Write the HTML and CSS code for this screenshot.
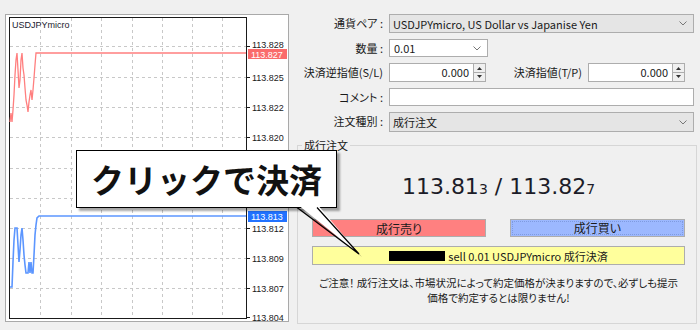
FILE: index.html
```html
<!DOCTYPE html>
<html lang="ja">
<head>
  <meta charset="UTF-8" />
  <title>新規注文</title>
  <link rel="stylesheet" href="styles.css">
</head>
<body>

  <div class="page">

    <!-- チャート -->
    <svg class="chart" width="284" height="308" viewBox="5 14 284 308">
      <rect x="5.5" y="14.5" width="283" height="307" fill="#fff" stroke="#a9a9a9"/>
      <g stroke="#c8c8c8" stroke-dasharray="3 3">
        <line x1="40.5" y1="18" x2="40.5" y2="318"/>
        <line x1="71.5" y1="18" x2="71.5" y2="318"/>
        <line x1="101.5" y1="18" x2="101.5" y2="318"/>
        <line x1="132.5" y1="18" x2="132.5" y2="318"/>
        <line x1="162.5" y1="18" x2="162.5" y2="318"/>
        <line x1="192.5" y1="18" x2="192.5" y2="318"/>
        <line x1="222.5" y1="18" x2="222.5" y2="318"/>
        <line x1="10" y1="46.5" x2="246" y2="46.5"/>
        <line x1="10" y1="77.5" x2="246" y2="77.5"/>
        <line x1="10" y1="107.5" x2="246" y2="107.5"/>
        <line x1="10" y1="137.5" x2="246" y2="137.5"/>
        <line x1="10" y1="168.5" x2="246" y2="168.5"/>
        <line x1="10" y1="198.5" x2="246" y2="198.5"/>
        <line x1="10" y1="228.5" x2="246" y2="228.5"/>
        <line x1="10" y1="258.5" x2="246" y2="258.5"/>
        <line x1="10" y1="288.5" x2="246" y2="288.5"/>
      </g>
      <rect x="9.5" y="17.5" width="237" height="301" fill="none" stroke="#1a1a1a"/>
      <g stroke="#1a1a1a">
        <line x1="246" y1="46.5" x2="250" y2="46.5"/>
        <line x1="246" y1="77.5" x2="250" y2="77.5"/>
        <line x1="246" y1="107.5" x2="250" y2="107.5"/>
        <line x1="246" y1="137.5" x2="250" y2="137.5"/>
        <line x1="246" y1="228.5" x2="250" y2="228.5"/>
        <line x1="246" y1="258.5" x2="250" y2="258.5"/>
        <line x1="246" y1="288.5" x2="250" y2="288.5"/>
        <line x1="246" y1="317.5" x2="250" y2="317.5"/>
      </g>
      <g class="axis">
        <text x="252" y="48">113.828</text>
        <text x="252" y="81">113.825</text>
        <text x="252" y="111">113.822</text>
        <text x="252" y="141">113.820</text>
        <text x="252" y="232">113.812</text>
        <text x="252" y="262">113.809</text>
        <text x="252" y="292">113.807</text>
        <text x="252" y="321">113.804</text>
      </g>
      <polyline fill="none" stroke="#ff7f7f" stroke-width="1.3"
        points="10,122 11,113 12,122 13,110 14,95 15,75 16,60 17,53 18,70 19,88 20,80 21,60 22,53 23,68 24,75 25,88 26,100 27,105 28,112 29,102 30,95 31,90 32,100 33,90 34,78 35,65 36,53 246,53"/>
      <polyline fill="none" stroke="#5c96ff" stroke-width="1.6"
        points="10,287 12,287 13,262 14,240 15,228 17,228 18,245 19,262 20,250 21,235 22,228 23,240 24,255 25,265 26,273 28,273 29,262 30,273 31,262 32,273 33,273 34,255 35,235 36,225 37,218 39,216 246,216"/>
      <rect x="248" y="49" width="39" height="10" fill="#fa6b6b"/>
      <text class="tag" x="251" y="57.5">113.827</text>
      <rect x="248" y="211" width="39" height="11" fill="#2272ff"/>
      <text class="tag" x="251" y="220">113.813</text>
      <text class="title" x="12" y="28">USDJPYmicro</text>
    </svg>

    <!-- 注文フォーム -->
    <div class="order">
      <div class="rows">
        <div class="row tall">
          <span class="lbl">通貨ペア :</span>
          <div class="field gray wide">USDJPYmicro, US Dollar vs Japanise Yen
            <svg class="chev" width="8" height="5" viewBox="0 0 8 5"><polyline points="0.5,0.5 4,4 7.5,0.5" fill="none" stroke="#777"/></svg>
          </div>
        </div>
        <div class="row">
          <span class="lbl">数量 :</span>
          <div class="field qty">0.01
            <svg class="chev" width="8" height="5" viewBox="0 0 8 5"><polyline points="0.5,0.5 4,4 7.5,0.5" fill="none" stroke="#777"/></svg>
          </div>
        </div>
        <div class="row tall">
          <span class="lbl">決済逆指値(S/L)</span>
          <div class="spin">
            <span class="num">0.000</span>
            <svg class="arrows" width="13" height="19" viewBox="0 0 13 19">
              <rect x="0.5" y="0.5" width="12" height="18" fill="#f0f0f0" stroke="#adadad"/>
              <line x1="1" y1="9.5" x2="12" y2="9.5" stroke="#adadad"/>
              <polygon points="4,7 9,7 6.5,4" fill="#333"/>
              <polygon points="4,12 9,12 6.5,15" fill="#333"/>
            </svg>
          </div>
          <span class="lbl lbl-tp">決済指値(T/P)</span>
          <div class="spin">
            <span class="num">0.000</span>
            <svg class="arrows" width="13" height="19" viewBox="0 0 13 19">
              <rect x="0.5" y="0.5" width="12" height="18" fill="#f0f0f0" stroke="#adadad"/>
              <line x1="1" y1="9.5" x2="12" y2="9.5" stroke="#adadad"/>
              <polygon points="4,7 9,7 6.5,4" fill="#333"/>
              <polygon points="4,12 9,12 6.5,15" fill="#333"/>
            </svg>
          </div>
        </div>
        <div class="row">
          <span class="lbl">コメント :</span>
          <div class="field wide"></div>
        </div>
        <div class="row taller">
          <span class="lbl">注文種別 :</span>
          <div class="field gray wide">成行注文
            <svg class="chev" width="8" height="5" viewBox="0 0 8 5"><polyline points="0.5,0.5 4,4 7.5,0.5" fill="none" stroke="#777"/></svg>
          </div>
        </div>
      </div>

      <fieldset class="market">
        <legend>成行注文</legend>
        <div class="trade">
          <div class="quote">113.81<small>3</small> / 113.82<small>7</small></div>
          <div class="buttons">
            <button class="sell">成行売り</button>
            <button class="buy"><span>成行買い</span></button>
          </div>
          <button class="close"><span class="redact"></span>sell 0.01 USDJPYmicro 成行決済</button>
          <p class="notice">ご注意！ 成行注文は、市場状況によって約定価格が決まりますので、必ずしも提示<br>価格で約定するとは限りません!</p>
        </div>
      </fieldset>
    </div>

    <!-- 吹き出し -->
    <div class="callout">クリックで決済</div>
    <svg class="tail" width="80" height="64" viewBox="0 0 80 64">
      <polygon points="9,9 30,9 72,57" fill="rgba(0,0,0,0.3)"/>
      <polygon points="7,4 27,4 69,54" fill="#fff"/>
      <polyline points="7,7.5 69,54 27,7.5" fill="none" stroke="#000" stroke-width="1.2"/>
    </svg>

  </div>

</body>
</html>
```

FILE: styles.css
```css
body {
  margin: 0;
  background-color: #f0f0f0;
  font-family: "Noto Sans CJK JP", sans-serif;
  font-size: 11px;
  color: #1a1a1a;
  font-feature-settings: "palt";
}
.page {
  position: relative;
  box-sizing: border-box;
  width: 700px;
  height: 330px;
  overflow: hidden;
  display: flex;
  gap: 6px;
  padding: 14px 0 0 5px;
}
.chart {
  display: block;
  flex: none;
}
.chart text {
  font-family: "Liberation Sans", sans-serif;
  font-size: 9px;
  fill: #1a1a1a;
}
.chart .tag {
  fill: #fff;
}
.chart .title {
  fill: #1a1a2e;
}

/* フォーム */
.order {
  width: 403px;
  flex: none;
}
.rows {
  display: flex;
  flex-direction: column;
  gap: 6px;
}
.row {
  display: flex;
  align-items: stretch;
  height: 18px;
}
.row.tall {
  height: 19px;
}
.row.taller {
  height: 20px;
}
.lbl {
  width: 88px;
  margin-right: 6px;
  text-align: right;
  white-space: nowrap;
  line-height: 18px;
}
.lbl-tp {
  width: 96px;
}
.field {
  box-sizing: border-box;
  display: flex;
  align-items: center;
  padding: 0 6px 0 3px;
  border: 1px solid #adadad;
  background-color: #fff;
  white-space: nowrap;
}
.field.gray {
  background-color: #e5e5e5;
}
.wide {
  width: 305px;
}
.qty {
  width: 99px;
  padding-left: 4px;
}
.chev {
  margin-left: auto;
}
.spin {
  display: flex;
  width: 97px;
}
.spin .num {
  flex: 1;
  box-sizing: border-box;
  border: 1px solid #adadad;
  border-right: none;
  background-color: #fff;
  text-align: right;
  padding-right: 4px;
  line-height: 17px;
}
.spin .arrows {
  display: block;
}

/* 成行注文 */
.market {
  margin: 5px 1px 0 2px;
  padding: 0 4px 18px;
  border: 1px solid #d6d6d6;
}
.market legend {
  padding: 0 2px;
  line-height: 16px;
}
.trade {
  margin: 0 7px 0 10px;
}
.quote {
  margin-top: 21px;
  height: 26px;
  line-height: 26px;
  text-align: center;
  font-family: "DejaVu Sans", sans-serif;
  font-size: 22px;
  color: #1c1c28;
}
.quote small {
  font-size: 14px;
}
.buttons {
  display: flex;
  justify-content: space-between;
  margin-top: 19px;
}
button {
  font-family: inherit;
  font-size: 12px;
  color: #1a1a1a;
  height: 18px;
  padding: 0;
  border: 1px solid #adadad;
  font-feature-settings: "palt";
}
.sell {
  width: 174px;
  background-color: #ff8080;
}
.buy {
  width: 175px;
  background-color: #9cb8ff;
  padding: 1px;
}
.buy span {
  display: block;
  height: 100%;
  box-sizing: border-box;
  border: 1px dotted #7f9be0;
  line-height: 12px;
}
.close {
  display: flex;
  align-items: center;
  justify-content: center;
  gap: 3px;
  width: 100%;
  height: 19px;
  margin-top: 9px;
  background-color: #ffff9c;
  font-size: 11px;
}
.redact {
  width: 56px;
  height: 10px;
  background-color: #000;
}
.notice {
  margin: 10px -12px 0;
  text-align: center;
  line-height: 15px;
  font-size: 10.5px;
  white-space: nowrap;
}

/* 吹き出し */
.callout {
  position: absolute;
  left: 76px;
  top: 150px;
  box-sizing: border-box;
  width: 261px;
  height: 58px;
  border: 1px solid #000;
  background-color: #fff;
  box-shadow: 3px 3px 2px rgba(0, 0, 0, 0.35);
  text-align: center;
  line-height: 56px;
  font-size: 33px;
  font-weight: bold;
  color: #111;
  font-feature-settings: normal;
}
.tail {
  position: absolute;
  left: 290px;
  top: 200px;
}
```
